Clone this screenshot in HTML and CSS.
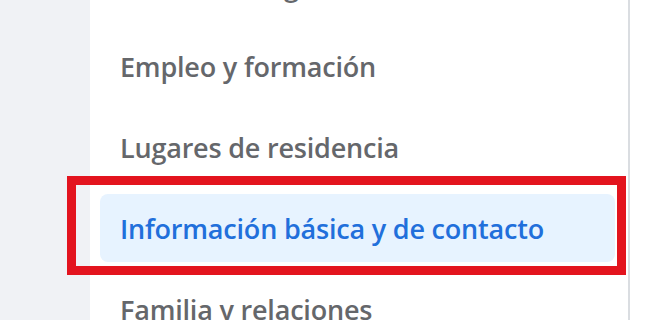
FILE: index.html
```html
<!DOCTYPE html>
<html lang="es">
<head>
    <meta charset="UTF-8">
    <title>Información</title>
    <link rel="stylesheet" href="styles.css">
</head>
<body>
<div class="page">
    <div class="side"></div>
    <div class="panel">
        <ul class="menu">
            <li class="item">Información general</li>
            <li class="item">Empleo y formación</li>
            <li class="item">Lugares de residencia</li>
            <li class="item active">Información básica y de contacto</li>
            <li class="item">Familia y relaciones</li>
        </ul>
        <div class="mark"></div>
    </div>
    <div class="rest"></div>
</div>
</body>
</html>
```

FILE: styles.css
```css
html, body {
    margin: 0;
    padding: 0;
    height: 100%;
    overflow: hidden;
}

body {
    font-family: "Open Sans", "Noto Sans", sans-serif;
    background-color: #fff;
}

.page {
    display: flex;
    height: 320px;
}

.side {
    width: 90px;
    flex: none;
    background-color: #f0f2f5;
}

.panel {
    position: relative;
    width: 538px;
    flex: none;
    border-right: 2px solid #dadde1;
    background-color: #fff;
}

.rest {
    flex: 1;
}

.menu {
    list-style: none;
    margin: -49px 0 0 0;
    padding: 0 13px 0 10px;
    display: flex;
    flex-direction: column;
    gap: 13px;
}

.item {
    height: 68px;
    display: flex;
    align-items: center;
    padding: 0 0 0 20px;
    border-radius: 8px;
    font-size: 27px;
    font-weight: 600;
    color: #65676b;
    white-space: nowrap;
    letter-spacing: -0.2px;
}

.active {
    background-color: #e7f3ff;
    color: #216fdb;
}

/* recuadro rojo de anotacion */
.mark {
    position: absolute;
    left: -23px;
    top: 176px;
    width: 541px;
    height: 81px;
    border: 9px solid #e3141e;
}
```
